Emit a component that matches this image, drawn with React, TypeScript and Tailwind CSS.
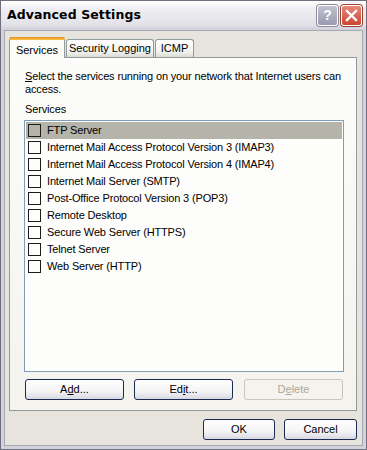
import React from "react";

const services = [
  "FTP Server",
  "Internet Mail Access Protocol Version 3 (IMAP3)",
  "Internet Mail Access Protocol Version 4 (IMAP4)",
  "Internet Mail Server (SMTP)",
  "Post-Office Protocol Version 3 (POP3)",
  "Remote Desktop",
  "Secure Web Server (HTTPS)",
  "Telnet Server",
  "Web Server (HTTP)",
];

function Btn({ children, w, disabled }: { children: React.ReactNode; w: string; disabled?: boolean }) {
  return (
    <div
      className={`${w} h-[21px] rounded-[3px] border flex items-center justify-center text-[11px] ${
        disabled
          ? "border-[#c9c7ba] text-[#aca899] bg-[#f4f3ee]"
          : "border-[#1b2a52] text-black bg-[linear-gradient(#ffffff,#f4f4f6_60%,#d8d8e2)]"
      }`}
    >
      {children}
    </div>
  );
}

export default function App() {
  return (
    <div
      className="w-[367px] h-[450px] flex flex-col bg-[#d4d3dc] border border-[#6e6e7c] overflow-hidden"
      style={{ fontFamily: '"Liberation Sans", Arial, sans-serif' }}
    >
      {/* Title bar */}
      <div className="h-[29px] flex items-center pl-[6px] pr-[4px] bg-[linear-gradient(#ffffff,#eeeef2_30%,#e2e2e8_80%,#d0d0da)] shrink-0">
        <div className="flex-1 font-bold text-black tracking-[0.1px]" style={{ fontFamily: '"DejaVu Sans", sans-serif', fontSize: "12.5px" }}>
          Advanced Settings
        </div>
        <div className="w-[21px] h-[21px] rounded-[3px] border border-white bg-[linear-gradient(#c2c2d0,#9a9ab0)] flex items-center justify-center text-white font-bold text-[14px] mr-[3px] shadow-[0_0_0_1px_#8a8a9c]">
          ?
        </div>
        <div className="w-[21px] h-[21px] rounded-[3px] border border-white bg-[linear-gradient(#e8887a,#c84632)] flex items-center justify-center shadow-[0_0_0_1px_#a04030]">
          <svg width="13" height="13" viewBox="0 0 13 13">
            <path d="M2 2 L11 11 M11 2 L2 11" stroke="white" strokeWidth="2.4" strokeLinecap="square" />
          </svg>
        </div>
      </div>

      {/* Body */}
      <div className="flex-1 flex flex-col bg-[#e6e4dd] mx-[3px] mb-[3px] border border-[#a8a8b4] pl-[4px] pr-[5px] pt-[6px]">
        {/* Tabs */}
        <div className="flex items-end h-[21px] relative z-10">
          <div className="h-[21px] w-[56px] bg-[#fbfbf8] border border-[#919b9c] border-b-0 rounded-t-[3px] relative flex items-start justify-center pt-[3px] text-[11px] text-black">
            <div className="absolute left-[-1px] right-[-1px] top-[-1px] h-[3px] rounded-t-[3px] bg-[linear-gradient(#e68b2c,#ffc73c)]" />
            <span className="mt-[1px]">Services</span>
          </div>
          <div className="h-[18px] w-[88px] ml-[1px] mb-[1px] bg-[linear-gradient(#ffffff,#f2f2ee_70%,#dcdcd6)] border border-[#919b9c] border-b-0 rounded-t-[3px] flex items-center justify-center text-[11px] text-black">
            Security Logging
          </div>
          <div className="h-[18px] w-[39px] ml-[1px] mb-[1px] bg-[linear-gradient(#ffffff,#f2f2ee_70%,#dcdcd6)] border border-[#919b9c] border-b-0 rounded-t-[3px] flex items-center justify-center text-[11px] text-black">
            ICMP
          </div>
        </div>
        {/* Panel */}
        <div className="h-[354px] -mt-[1px] border border-[#919b9c] bg-[linear-gradient(#fcfcfa,#f4f3ee)] pl-[14px] pt-[12px] flex flex-col text-[11px] text-black tracking-[-0.15px]">
          <div className="leading-[13px] w-[330px] pl-[1px]">
            <span className="underline">S</span>elect the services running on your network that Internet users can access.
          </div>
          <div className="mt-[7px] leading-[13px] pl-[1px]">Services</div>
          <div className="mt-[4px] h-[252px] w-[320px] border border-[#7f9db9] bg-[#fdfdfb] p-[1px] flex flex-col">
            {services.map((s, i) => (
              <div
                key={s}
                className={`h-[17px] flex items-center pl-[2px] ${i === 0 ? "bg-[#b4b4aa]" : ""}`}
              >
                <div className="w-[13px] h-[13px] border border-[#1c1c1c] bg-transparent shrink-0" />
                <span className="ml-[6px] leading-[13px]">{s}</span>
              </div>
            ))}
          </div>
          <div className="mt-[7px] flex tracking-normal">
            <div className="ml-[1px]" />
            <Btn w="w-[99px]">
              A<span className="underline">d</span>d...
            </Btn>
            <div className="w-[10px]" />
            <Btn w="w-[99px]">
              Ed<span className="underline">i</span>t...
            </Btn>
            <div className="w-[11px]" />
            <Btn w="w-[99px]" disabled>
              D<span className="underline">e</span>lete
            </Btn>
          </div>
        </div>
        {/* Bottom buttons */}
        <div className="flex justify-end mt-[8px] pr-[0px]">
          <Btn w="w-[72px]">OK</Btn>
          <div className="w-[9px]" />
          <Btn w="w-[73px]">Cancel</Btn>
        </div>
      </div>
    </div>
  );
}
